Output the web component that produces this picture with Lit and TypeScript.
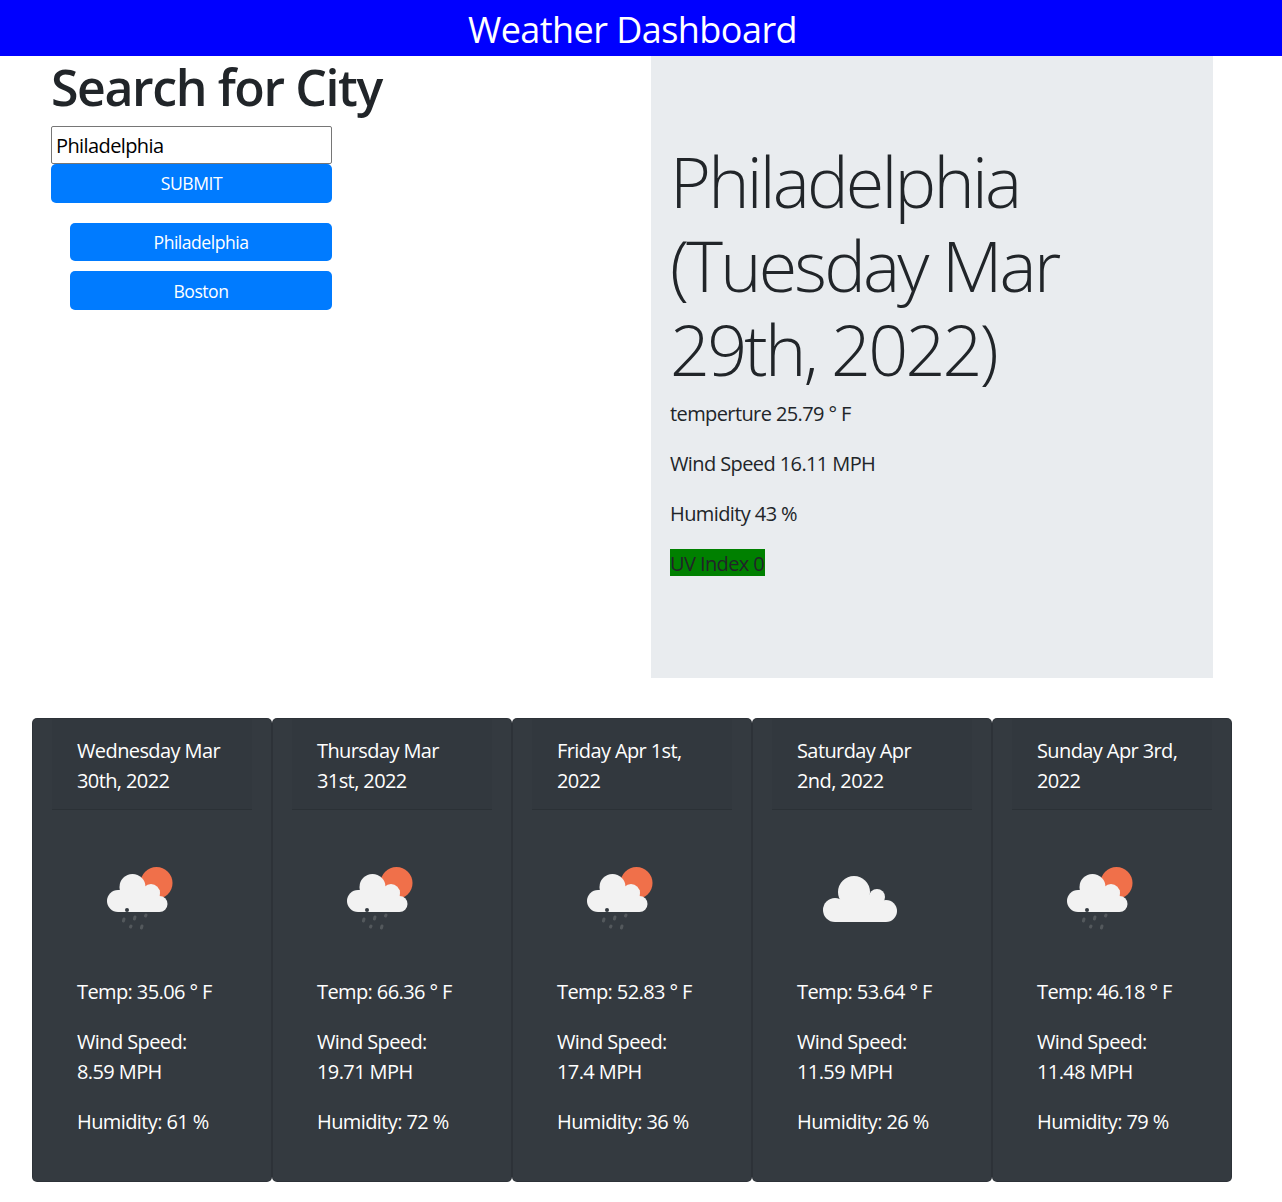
import { LitElement, html, css, svg } from "lit";
import { customElement } from "lit/decorators.js";

const FORECAST = [
  { date: "Wednesday Mar 30th, 2022", temp: "35.06", wind: "8.59", humidity: 61, rain: true },
  { date: "Thursday Mar 31st, 2022", temp: "66.36", wind: "19.71", humidity: 72, rain: true },
  { date: "Friday Apr 1st, 2022", temp: "52.83", wind: "17.4", humidity: 36, rain: true },
  { date: "Saturday Apr 2nd, 2022", temp: "53.64", wind: "11.59", humidity: 26, rain: false },
  { date: "Sunday Apr 3rd, 2022", temp: "46.18", wind: "11.48", humidity: 79, rain: true },
];

const rainIcon = svg`
  <g transform="translate(1 1)">
    <circle cx="65.5" cy="37" r="16" fill="#f0704a"></circle>
    <g fill="#f2f2f2">
      <circle cx="27" cy="55" r="11"></circle>
      <circle cx="41.5" cy="41" r="13"></circle>
      <circle cx="60" cy="47" r="9"></circle>
      <circle cx="68.5" cy="58" r="8"></circle>
      <rect x="27" y="44" width="41.5" height="22"></rect>
    </g>
    <circle cx="36" cy="64" r="2" fill="#343a40"></circle>
    <g stroke="#53585c" stroke-width="3" stroke-linecap="round">
      <path d="M33 73l-.6 2"></path>
      <path d="M44 71l-.6 2"></path>
      <path d="M55 69l-.5 1"></path>
      <path d="M40 80l-.5 1"></path>
      <path d="M51 80l-.6 2"></path>
    </g>
  </g>
`;

const cloudIcon = svg`
  <g fill="#f2f2f2">
    <circle cx="25" cy="65" r="12"></circle>
    <circle cx="44" cy="47" r="16"></circle>
    <circle cx="67" cy="52" r="8"></circle>
    <circle cx="76" cy="66" r="11"></circle>
    <rect x="25" y="60" width="51" height="17"></rect>
    <rect x="40" y="50" width="28" height="12"></rect>
  </g>
`;

@customElement("app-root")
export class AppRoot extends LitElement {
  static styles = css`
    :host {
      display: block;
      min-height: 1202px;
      background: #fff;
      color: #212529;
      font-family: "Open Sans", "Noto Sans", sans-serif;
      font-size: 20px;
      line-height: 30px;
      letter-spacing: -0.6px;
    }

    .title {
      height: 56px;
      margin: 0;
      padding-right: 17px;
      background: #0000ff;
      color: #fff;
      font-size: 36px;
      font-weight: 400;
      line-height: 60px;
      letter-spacing: -0.55px;
      text-align: center;
    }

    .top {
      display: grid;
      grid-template-columns: 600px 562px;
      padding-left: 51px;
    }

    .search {
      display: flex;
      flex-direction: column;
      align-items: flex-start;
    }

    .search h2 {
      margin: 0 0 9px;
      padding-top: 1px;
      font-size: 50px;
      font-weight: 600;
      line-height: 60px;
      letter-spacing: -1.4px;
    }

    .city-input {
      box-sizing: border-box;
      width: 281px;
      height: 38px;
      padding: 0 4px;
      border: 1px solid #767676;
      border-radius: 2px;
      color: #000;
      font: inherit;
      letter-spacing: inherit;
    }

    button {
      display: block;
      border: 0;
      border-radius: 5px;
      background: #007bff;
      color: #fff;
      font-family: inherit;
      font-size: 17.6px;
      letter-spacing: -0.5px;
      line-height: 26px;
      text-align: center;
    }

    .submit {
      width: 281px;
      height: 39px;
      padding: 0 0 2px;
      text-transform: uppercase;
    }

    .history {
      display: flex;
      flex-direction: column;
      gap: 10px;
      margin: 20px 0 0 19px;
    }

    .history button {
      width: 262px;
      height: 38.4px;
    }

    .current {
      padding: 81px 20px 79px 19px;
      background: #e9ecef;
    }

    .current h1 {
      margin: 0 0 8px;
      padding-top: 2px;
      font-size: 70px;
      font-weight: 300;
      line-height: 84px;
      letter-spacing: -2.8px;
    }

    .current p {
      margin: 0 0 20px;
    }

    .current .uv {
      width: fit-content;
      height: 27px;
      margin: 20px 0 23px;
      padding-right: 1px;
      background: #008000;
      line-height: 29px;
    }

    .forecast {
      display: flex;
      margin: 40px 0 0 32px;
    }

    .card {
      box-sizing: border-box;
      width: 240px;
      height: 464px;
      border: 1px solid rgba(0, 0, 0, 0.125);
      border-radius: 5px;
      background: #343a40;
      color: #fff;
    }

    .card-header {
      margin: 0 19px;
      padding: 17px 25px 13px;
      border-bottom: 1px solid rgba(0, 0, 0, 0.125);
      background: rgba(0, 0, 0, 0.03);
    }

    .card-body {
      padding: 25px 44px;
    }

    .card-body svg {
      display: block;
      width: 100px;
      height: 100px;
      margin: 10px 0 32px 13px;
    }

    .card-body p {
      margin: 0 0 20px;
    }
  `;

  render() {
    return html`
      <h1 class="title">Weather Dashboard</h1>
      <div class="top">
        <section class="search">
          <h2>Search for City</h2>
          <input class="city-input" type="text" .value=${"Philadelphia"} />
          <button class="submit">Submit</button>
          <div class="history">
            <button>Philadelphia</button>
            <button>Boston</button>
          </div>
        </section>
        <section class="current">
          <h1>Philadelphia (Tuesday Mar 29th, 2022)</h1>
          <p>temperture 25.79 ° F</p>
          <p>Wind Speed 16.11 MPH</p>
          <p>Humidity 43 %</p>
          <p class="uv">UV Index 0</p>
        </section>
      </div>
      <div class="forecast">
        ${FORECAST.map(
          (day) => html`
            <article class="card">
              <div class="card-header">${day.date}</div>
              <div class="card-body">
                <svg viewBox="0 0 100 100">${day.rain ? rainIcon : cloudIcon}</svg>
                <p>Temp: ${day.temp} ° F</p>
                <p>Wind Speed: ${day.wind} MPH</p>
                <p>Humidity: ${day.humidity} %</p>
              </div>
            </article>
          `
        )}
      </div>
    `;
  }
}
